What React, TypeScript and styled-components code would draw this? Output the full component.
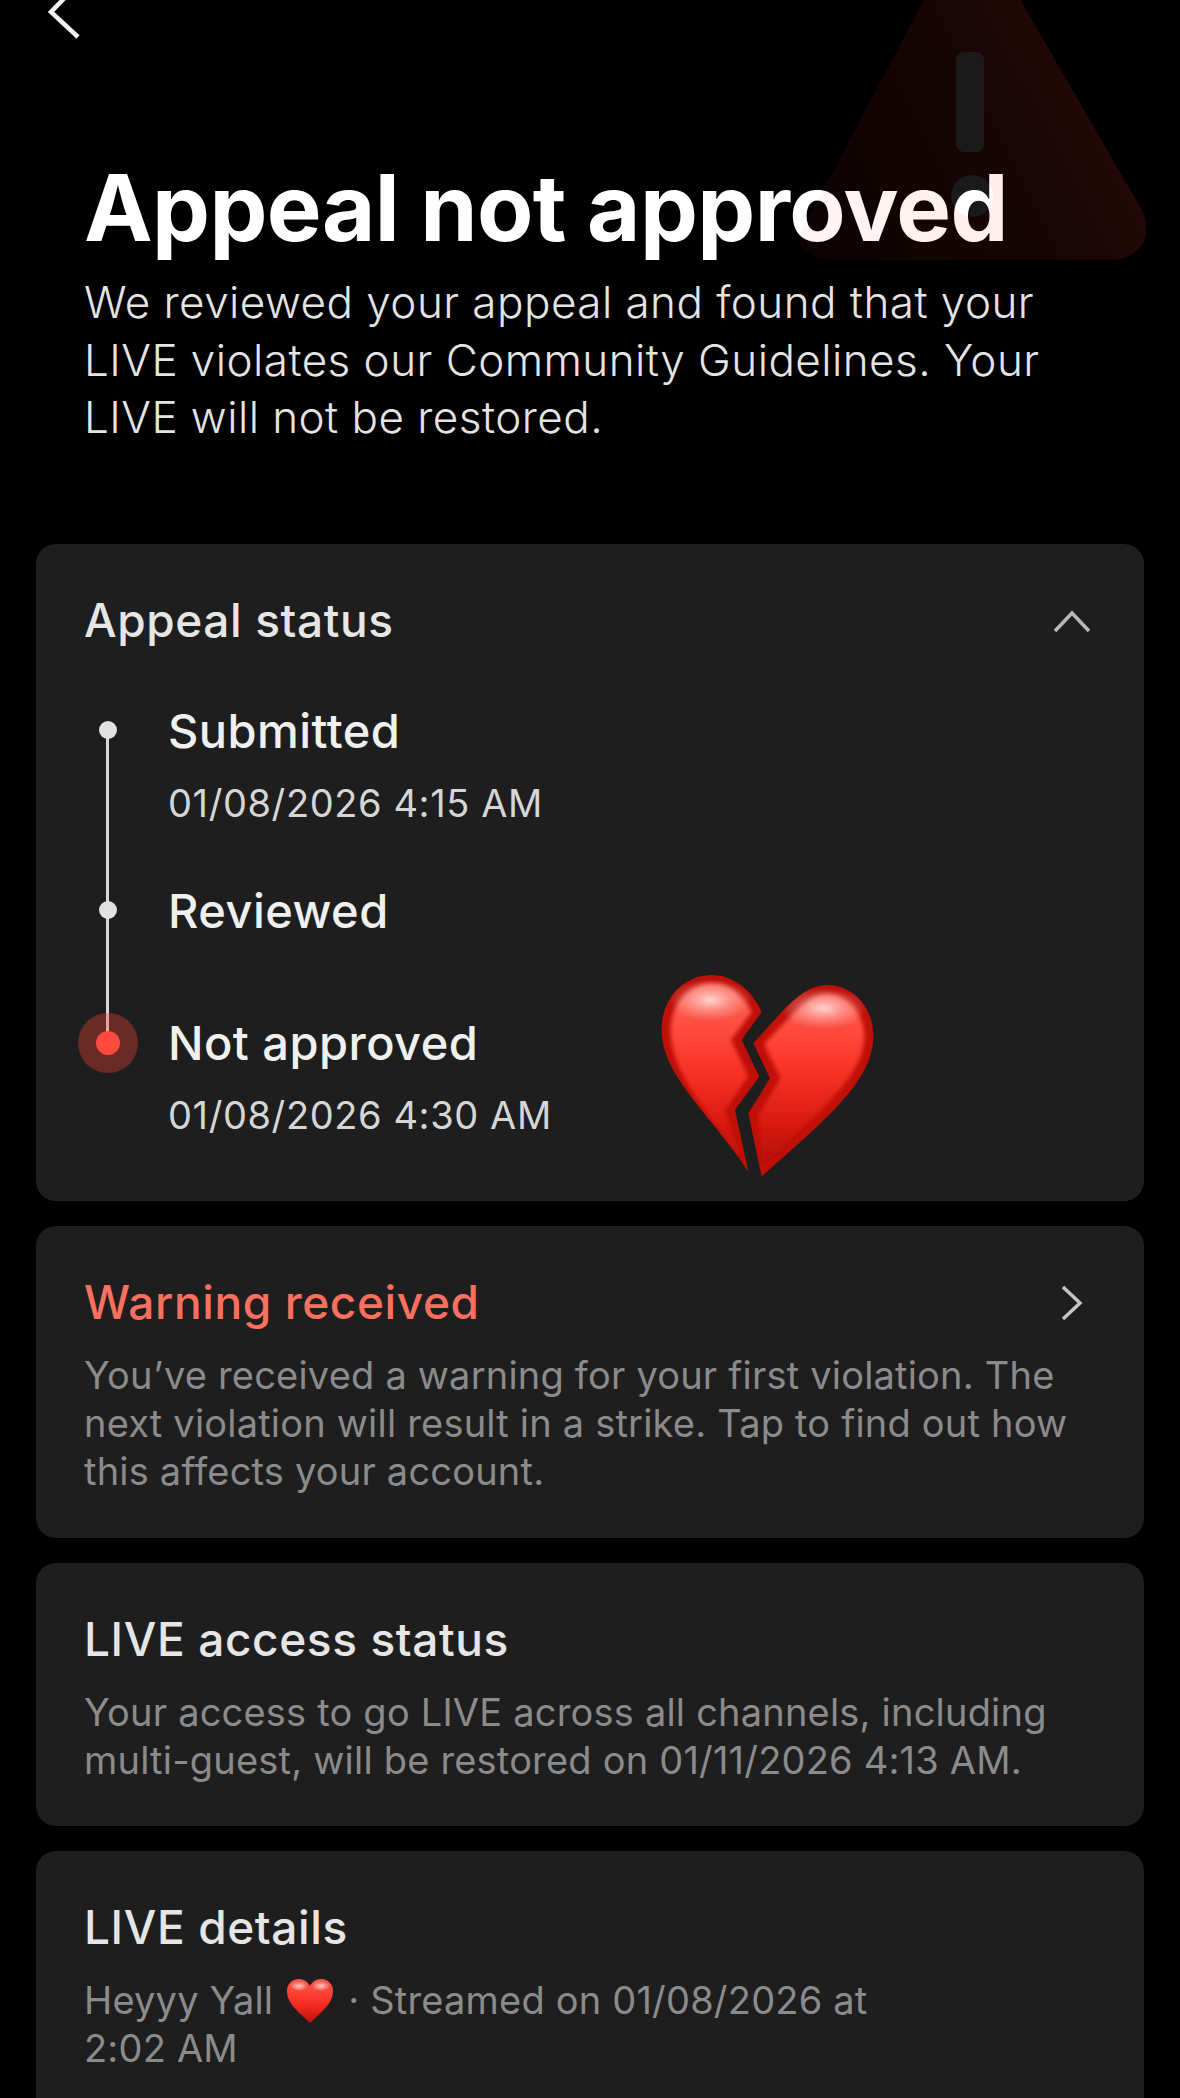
import React from 'react';
import styled, { createGlobalStyle } from 'styled-components';

const GlobalStyle = createGlobalStyle`
  html, body {
    margin: 0;
    padding: 0;
    height: 2098px;
    overflow: hidden;
    background: #000;
    font-family: Inter, 'Liberation Sans', sans-serif;
  }
`;

const Page = styled.div`
  position: relative;
  width: 1180px;
  height: 2098px;
  overflow: hidden;
  background: #000;
`;

const TopBar = styled.div`
  height: 153px;
  padding-left: 44px;
`;

const Hero = styled.header`
  padding: 0 84px;
  height: 391px;
`;

const Title = styled.h1`
  position: relative;
  z-index: 1;
  margin: 0;
  font-size: 92px;
  line-height: 110px;
  font-weight: 700;
  letter-spacing: -0.6px;
  color: #fff;
  white-space: nowrap;
`;

const Lead = styled.p`
  margin: 11px 0 0;
  width: 1000px;
  font-size: 44px;
  line-height: 57.5px;
  font-weight: 300;
  letter-spacing: 0.46px;
  color: #e4e4e4;
`;

const Warning = styled.svg`
  position: absolute;
  z-index: 2;
  top: 0;
  left: 780px;
  pointer-events: none;
`;

const WarningDot = styled.span`
  position: absolute;
  left: 951px;
  top: 175px;
  width: 42px;
  height: 42px;
  border-radius: 50%;
  background: #1a1a1a;
`;

const Cards = styled.main`
  display: flex;
  flex-direction: column;
  gap: 25px;
  padding: 0 36px;
`;

const Card = styled.section<{ $height: number }>`
  position: relative;
  box-sizing: border-box;
  height: ${(p) => p.$height}px;
  padding: 48px 48px 0;
  border-radius: 20px;
  background: #1e1e1e;
`;

const CardHead = styled.div`
  display: flex;
  align-items: center;
  justify-content: space-between;
  height: 56px;
`;

const CardTitle = styled.h2<{ $warn?: boolean }>`
  margin: 0;
  font-size: 46px;
  line-height: 56px;
  font-weight: 500;
  letter-spacing: 0.6px;
  color: ${(p) => (p.$warn ? '#f9705f' : '#e6e6e6')};
`;

const CardText = styled.p`
  margin: 21px 0 0;
  font-size: 38px;
  line-height: 48px;
  letter-spacing: 0.2px;
  color: #8b8b8b;
`;

const Timeline = styled.ol`
  list-style: none;
  margin: 58px 0 0;
  padding: 0;
`;

const Step = styled.li<{ $height: number }>`
  position: relative;
  height: ${(p) => p.$height}px;
  padding-left: 84px;
`;

const Rail = styled.span`
  position: absolute;
  left: 22px;
  top: 24px;
  bottom: -24px;
  width: 3px;
  background: #d8d8d8;
`;

const Dot = styled.span`
  position: absolute;
  left: 15px;
  top: 15px;
  width: 18px;
  height: 18px;
  border-radius: 50%;
  background: #e2e2e2;
`;

const RedDot = styled.span`
  position: absolute;
  left: -6px;
  top: -5px;
  width: 60px;
  height: 60px;
  border-radius: 50%;
  background: rgba(254, 70, 60, 0.34);

  &::after {
    content: '';
    position: absolute;
    left: 18px;
    top: 18px;
    width: 24px;
    height: 24px;
    border-radius: 50%;
    background: #fe4a3e;
  }
`;

const StepName = styled.div`
  font-size: 47px;
  line-height: 50px;
  font-weight: 500;
  letter-spacing: 0.45px;
  color: #f0f0f0;
`;

const StepDate = styled.div`
  margin-top: 24px;
  font-size: 38px;
  line-height: 46px;
  letter-spacing: 0.6px;
  color: #d6d6d6;
`;

const Sticker = styled.svg`
  position: absolute;
  left: 594px;
  top: 406px;
`;

const InlineHeart = styled.svg`
  display: inline-block;
  vertical-align: -10px;
  margin: 0 14px 0 2px;
`;

const Chevron = styled.svg<{ $inset: number }>`
  flex: none;
  margin-top: 2px;
  margin-right: ${(p) => p.$inset}px;
`;

const leftEdge =
  'M355 665C250 500 95 380 95 240C95 140 165 75 245 75C310 75 365 120 395 185L335 270L388 380L315 480Z';
const rightEdge =
  'M395 680L355 490L420 385L370 280L470 170C510 130 550 105 590 105C670 105 730 170 730 260C730 400 560 530 395 680Z';
const leftFace =
  'M340 640C240 490 122 375 122 240C122 160 180 100 245 100C300 100 340 135 365 185L303 270L355 380L285 480Z';
const rightFace =
  'M400 640L385 495L452 385L402 282L490 190C525 155 555 132 590 132C655 132 703 190 703 260C703 385 535 515 400 640Z';

const BrokenHeart = () => (
  <Sticker width="270" height="240" viewBox="0 0 810 720">
    <defs>
      <linearGradient id="bh-fill" gradientUnits="userSpaceOnUse" x1="0" y1="90" x2="0" y2="670">
        <stop offset="0" stopColor="#ff6a5c" />
        <stop offset="0.45" stopColor="#fb3428" />
        <stop offset="0.75" stopColor="#d81a10" />
        <stop offset="1" stopColor="#a80b05" />
      </linearGradient>
      <radialGradient id="bh-shine" cx="0.5" cy="0.5" r="0.5">
        <stop offset="0" stopColor="#fff" stopOpacity="0.72" />
        <stop offset="0.5" stopColor="#fff" stopOpacity="0.3" />
        <stop offset="1" stopColor="#fff" stopOpacity="0" />
      </radialGradient>
      <filter id="bh-soft" x="-5%" y="-5%" width="110%" height="110%">
        <feGaussianBlur stdDeviation="6" />
      </filter>
      <clipPath id="bh-left">
        <path d={leftEdge} />
      </clipPath>
      <clipPath id="bh-right">
        <path d={rightEdge} />
      </clipPath>
    </defs>
    <path d={leftEdge} fill="#bf1008" />
    <path d={rightEdge} fill="#bf1008" />
    <g clipPath="url(#bh-left)">
      <path d={leftFace} fill="url(#bh-fill)" filter="url(#bh-soft)" />
      <ellipse cx="240" cy="150" rx="125" ry="62" fill="url(#bh-shine)" />
    </g>
    <g clipPath="url(#bh-right)">
      <path d={rightFace} fill="url(#bh-fill)" filter="url(#bh-soft)" />
      <ellipse cx="580" cy="175" rx="130" ry="62" fill="url(#bh-shine)" />
    </g>
  </Sticker>
);

const SmallHeart = () => (
  <InlineHeart width="48" height="46" viewBox="0 0 48 46">
    <defs>
      <linearGradient id="sh-fill" x1="0" y1="0" x2="0" y2="1">
        <stop offset="0" stopColor="#ff5a4c" />
        <stop offset="0.55" stopColor="#f92f24" />
        <stop offset="1" stopColor="#c20f08" />
      </linearGradient>
      <radialGradient id="sh-shine" cx="0.5" cy="0.5" r="0.5">
        <stop offset="0" stopColor="#fff" stopOpacity="0.7" />
        <stop offset="1" stopColor="#fff" stopOpacity="0" />
      </radialGradient>
    </defs>
    <path
      d="M24 45C14 35 1 26 1 13C1 6 6 1 13 1C18 1 22 4 24 8C26 4 30 1 35 1C42 1 47 6 47 13C47 26 34 35 24 45Z"
      fill="url(#sh-fill)"
    />
    <ellipse cx="13" cy="8" rx="9" ry="5" fill="url(#sh-shine)" />
    <ellipse cx="35" cy="8" rx="9" ry="5" fill="url(#sh-shine)" />
  </InlineHeart>
);

export default function App() {
  return (
    <Page>
      <GlobalStyle />
      <TopBar>
        <svg width="40" height="40" viewBox="0 0 40 40" fill="none">
          <path d="M34 -16L7 12L34 37" stroke="#f2f2f2" strokeWidth="4.5" />
        </svg>
      </TopBar>
      <Hero>
        <Title>Appeal not approved</Title>
        <Lead>
          We reviewed your appeal and found that your LIVE violates our
          Community Guidelines. Your LIVE will not be restored.
        </Lead>
      </Hero>
      <WarningDot />
      <Warning width="400" height="280" viewBox="0 0 400 280">
        <defs>
          <linearGradient id="tri" x1="0" y1="0.8" x2="1" y2="0.3">
            <stop offset="0" stopColor="#ff3a2a" stopOpacity="0.05" />
            <stop offset="0.5" stopColor="#ff3a2a" stopOpacity="0.09" />
            <stop offset="1" stopColor="#ff3a2a" stopOpacity="0.17" />
          </linearGradient>
        </defs>
        <path
          fillRule="evenodd"
          d="M190 -87L359 205C377 235 360 260 330 260H60C30 260 10 248 24 226L190 -87ZM192 175A21 21 0 1 0 192 217A21 21 0 1 0 192 175Z"
          fill="url(#tri)"
        />
        <rect x="176" y="52" width="28" height="100" rx="8" fill="#1a1a1a" />
      </Warning>
      <Cards>
        <Card $height={657}>
          <CardHead>
            <CardTitle>Appeal status</CardTitle>
            <Chevron $inset={5} width="38" height="26" viewBox="0 0 38 26" fill="none">
              <path d="M2 23L19 5L36 23" stroke="#b8b8b8" strokeWidth="3.5" />
            </Chevron>
          </CardHead>
          <Timeline>
            <Step $height={180}>
              <Rail />
              <Dot />
              <StepName>Submitted</StepName>
              <StepDate>01/08/2026 4:15 AM</StepDate>
            </Step>
            <Step $height={132}>
              <Rail />
              <Dot />
              <StepName>Reviewed</StepName>
            </Step>
            <Step $height={120}>
              <RedDot />
              <StepName>Not approved</StepName>
              <StepDate>01/08/2026 4:30 AM</StepDate>
            </Step>
          </Timeline>
          <BrokenHeart />
        </Card>
        <Card $height={312}>
          <CardHead>
            <CardTitle $warn>Warning received</CardTitle>
            <Chevron $inset={12} width="24" height="36" viewBox="0 0 24 36" fill="none">
              <path d="M3 2L20 18L3 34" stroke="#c4c4c4" strokeWidth="3.5" />
            </Chevron>
          </CardHead>
          <CardText>
            You’ve received a warning for your first violation. The next
            violation will result in a strike. Tap to find out how this affects
            your account.
          </CardText>
        </Card>
        <Card $height={263}>
          <CardHead>
            <CardTitle>LIVE access status</CardTitle>
          </CardHead>
          <CardText>
            Your access to go LIVE across all channels, including multi-guest,
            will be restored on 01/11/2026 4:13 AM.
          </CardText>
        </Card>
        <Card $height={300}>
          <CardHead>
            <CardTitle>LIVE details</CardTitle>
          </CardHead>
          <CardText>
            Heyyy Yall <SmallHeart />· Streamed on 01/08/2026 at
            <br />
            2:02 AM
          </CardText>
        </Card>
      </Cards>
    </Page>
  );
}
